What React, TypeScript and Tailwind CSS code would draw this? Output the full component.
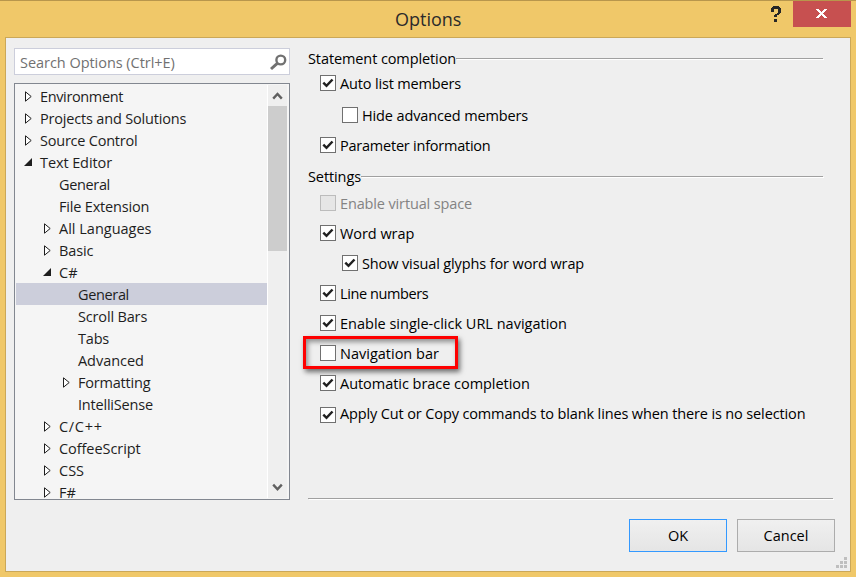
import React from "react";

type Item = { t: string; l: 0 | 1 | 2; a?: "closed" | "open"; s?: string; sel?: boolean };

const tree: Item[] = [
  { t: "Environment", l: 0, a: "closed", s: "tracking-[-0.36px]" },
  { t: "Projects and Solutions", l: 0, a: "closed", s: "tracking-[-0.18px]" },
  { t: "Source Control", l: 0, a: "closed", s: "tracking-[-0.23px]" },
  { t: "Text Editor", l: 0, a: "open", s: "tracking-[-0.1px]" },
  { t: "General", l: 1, s: "tracking-[-0.35px]" },
  { t: "File Extension", l: 1, s: "tracking-[-0.18px]" },
  { t: "All Languages", l: 1, a: "closed" },
  { t: "Basic", l: 1, a: "closed", s: "tracking-[-0.1px]" },
  { t: "C#", l: 1, a: "open" },
  { t: "General", l: 2, sel: true, s: "tracking-[-0.35px]" },
  { t: "Scroll Bars", l: 2, s: "tracking-[-0.16px]" },
  { t: "Tabs", l: 2, s: "tracking-[-0.2px]" },
  { t: "Advanced", l: 2, s: "tracking-[-0.05px]" },
  { t: "Formatting", l: 2, a: "closed", s: "tracking-[-0.2px]" },
  { t: "IntelliSense", l: 2, s: "tracking-[-0.2px]" },
  { t: "C/C++", l: 1, a: "closed", s: "tracking-[0.7px]" },
  { t: "CoffeeScript", l: 1, a: "closed", s: "tracking-[-0.06px]" },
  { t: "CSS", l: 1, a: "closed" },
  { t: "F#", l: 1, a: "closed" },
];

const indent = { 0: "pl-[8px]", 1: "pl-[27px]", 2: "pl-[46px]" };

function Arrow({ kind }: { kind?: "closed" | "open" }) {
  return (
    <svg width="16" height="12" viewBox="0 0 16 12" className="shrink-0">
      {kind === "closed" && <path d="M1.5 1.8V11.2L7.2 6.5Z" fill="#fff" stroke="#1e1e1e" />}
      {kind === "open" && <path d="M0 10H8V2Z" fill="#1e1e1e" />}
    </svg>
  );
}

function Row({ item }: { item: Item }) {
  return (
    <div className={`flex h-[22px] shrink-0 items-center ${indent[item.l]} ${item.sel ? "bg-[#cccedb]" : ""}`}>
      <Arrow kind={item.a} />
      <span className={`whitespace-nowrap pt-0.5 ${item.s ?? ""}`}>{item.t}</span>
    </div>
  );
}

function Check({ t, on, off, cls, s }: { t: string; on?: boolean; off?: boolean; cls: string; s?: string }) {
  return (
    <div className={`flex h-4 items-center gap-1 ${cls}`}>
      <span className={`h-4 w-4 shrink-0 border ${off ? "border-[#bcbcbc] bg-[#e6e6e6]" : "border-[#707070] bg-white"}`}>
        {on && (
          <svg width="14" height="14" viewBox="0 0 14 14">
            <path d="M2.3 6.7L5.5 9.8L11.5 3.5" fill="none" stroke="#212121" strokeWidth="2.5" />
          </svg>
        )}
      </span>
      <span className={`whitespace-nowrap ${off ? "text-[#838383]" : ""} ${s ?? "pt-0.5"}`}>{t}</span>
    </div>
  );
}

function Group({ t, cls, s }: { t: string; cls?: string; s?: string }) {
  return (
    <div className={`flex h-5 items-center ${cls ?? ""}`}>
      <span className={`whitespace-nowrap ${s ?? ""}`}>{t}</span>
      <span className="mb-px h-px flex-1 bg-[#a0a0a0] shadow-[1px_1px_0_#fff]" />
    </div>
  );
}

export default function App() {
  return (
    <div className="flex h-[577px] w-[856px] flex-col overflow-hidden border-t border-[#b8964c] bg-[#f0c869] font-['Open_Sans','Noto_Sans',sans-serif] text-[14.5px] leading-[20px] text-black">
      <div className="flex h-9 shrink-0 items-start">
        <div className="h-9 w-[771px] pl-[395px] pt-[5px] text-[18px] leading-[26px] text-[#2b2b2b]">Options</div>
        <svg width="10" height="16" viewBox="0 0 10 16" className="mt-[5px]" shapeRendering="crispEdges">
          <path d="M2 0H8V1H9V2H10V7H9V8H8V9H6V11H3V9H4V8H6V7H7V3H3V6H0V2H1V1H2ZM3 13H6V16H3Z" fill="#262626" />
        </svg>
        <div className="ml-3 flex h-[26px] w-[58px] items-start bg-[#c75050] pl-[23px] pt-2">
          <svg width="11" height="9" viewBox="0 0 11 9" shapeRendering="crispEdges">
            <path
              d="M0 0H3V1H4V2H5V3H6V2H7V1H8V0H11V1H10V2H9V3H8V4H7V5H8V6H9V7H10V8H11V9H8V8H7V7H6V6H5V7H4V8H3V9H0V8H1V7H2V6H3V5H4V4H3V3H2V2H1V1H0Z"
              fill="#fff"
            />
          </svg>
        </div>
      </div>
      <div className="mx-[5px] flex h-[535px] flex-col border border-[#cba858] bg-[#efefef]">
        <div className="flex h-[470px] shrink-0 pl-2">
          <div className="flex w-[276px] flex-col pt-[10px]">
            <div className="flex h-[27px] items-center justify-between border border-[#cccedb] bg-white pl-[5px] pr-[2px] text-[#717171]">
              <span className="whitespace-nowrap pt-0.5 tracking-[-0.04px]">Search Options (Ctrl+E)</span>
              <svg width="18" height="18" viewBox="0 0 18 18">
                <circle cx="11.8" cy="7" r="4.4" fill="none" stroke="#717171" strokeWidth="2.4" />
                <path d="M8.3 10.3L2 16" stroke="#717171" strokeWidth="3" />
              </svg>
            </div>
            <div className="mt-2 flex h-[417px] border border-[#828790] bg-[#f5f5f5] pl-px text-[#1e1e1e]">
              <div className="flex w-[251px] flex-col overflow-hidden pt-px">
                {tree.map((r, i) => (
                  <Row key={i} item={r} />
                ))}
              </div>
              <div className="my-px w-px bg-white" />
              <div className="my-px flex w-[19px] flex-col items-center bg-[#efefef]">
                <svg width="19" height="21" viewBox="0 0 19 21">
                  <path d="M5.2 13.6L9.5 9L13.8 13.6" fill="none" stroke="#606060" strokeWidth="2.4" />
                </svg>
                <div className="h-[145px] w-[19px] bg-[#cdcdcd]" />
                <div className="flex-1" />
                <svg width="19" height="21" viewBox="0 0 19 21">
                  <path d="M5.2 7.6L9.5 12.2L13.8 7.6" fill="none" stroke="#606060" strokeWidth="2.4" />
                </svg>
              </div>
            </div>
          </div>
          <div className="ml-[18px] flex w-[526px] flex-col pt-[11px]">
            <Group t="Statement completion" cls="mr-[11px]" s="tracking-[-0.1px]" />
            <Check t="Auto list members" on cls="ml-3 mt-[6px]" s="pt-0.5 tracking-[-0.16px]" />
            <Check t="Hide advanced members" cls="ml-[34px] mt-4" s="pt-0.5 tracking-[-0.13px]" />
            <Check t="Parameter information" on cls="ml-3 mt-[14px]" s="pt-0.5 tracking-[-0.23px]" />
            <Group t="Settings" cls="mr-[11px] mt-[14px]" s="tracking-[-0.1px]" />
            <Check t="Enable virtual space" off cls="ml-3 mt-2" s="pt-0.5 tracking-[-0.14px]" />
            <Check t="Word wrap" on cls="ml-3 mt-[14px]" s="pt-0.5 tracking-[-0.06px]" />
            <Check t="Show visual glyphs for word wrap" on cls="ml-[34px] mt-[14px]" s="pt-0.5 tracking-[-0.12px]" />
            <Check t="Line numbers" on cls="ml-3 mt-[14px]" s="pt-0.5 tracking-[-0.4px]" />
            <Check t="Enable single-click URL navigation" on cls="ml-3 mt-[14px]" />
            <div className="-ml-[5px] mt-[5px] flex h-[33px] w-[155px] items-center border-[3px] border-[#fe0000] shadow-[2px_3px_5px_rgba(0,0,0,0.55),inset_2px_3px_5px_rgba(0,0,0,0.4)]">
              <Check t="Navigation bar" cls="ml-[14px]" />
            </div>
            <Check t="Automatic brace completion" on cls="ml-3 mt-[6px]" s="pt-0.5 tracking-[-0.04px]" />
            <Check t="Apply Cut or Copy commands to blank lines when there is no selection" on cls="ml-3 mt-4" s="pb-0.5 tracking-[-0.13px]" />
            <div className="mr-px mt-[75px] h-px shrink-0 bg-[#a0a0a0] shadow-[1px_1px_0_#fff]" />
          </div>
        </div>
        <div className="flex h-[63px] items-start justify-end pt-[11px]">
          <button className="h-[33px] w-[98px] border border-[#3399ff] bg-gradient-to-b from-[#f0f0f0] to-[#e5e5e5]">OK</button>
          <button className="ml-[10px] h-[33px] w-[98px] border border-[#acacac] bg-gradient-to-b from-[#f0f0f0] to-[#e5e5e5]">Cancel</button>
          <svg width="15" height="13" viewBox="0 0 15 13" className="mt-[37px]" fill="#bfbfbf" shapeRendering="crispEdges">
            <path d="M9 1h3v3h-3zM5 5h3v3h-3zM9 5h3v3h-3zM1 9h3v3h-3zM5 9h3v3h-3zM9 9h3v3h-3z" />
          </svg>
        </div>
      </div>
    </div>
  );
}
